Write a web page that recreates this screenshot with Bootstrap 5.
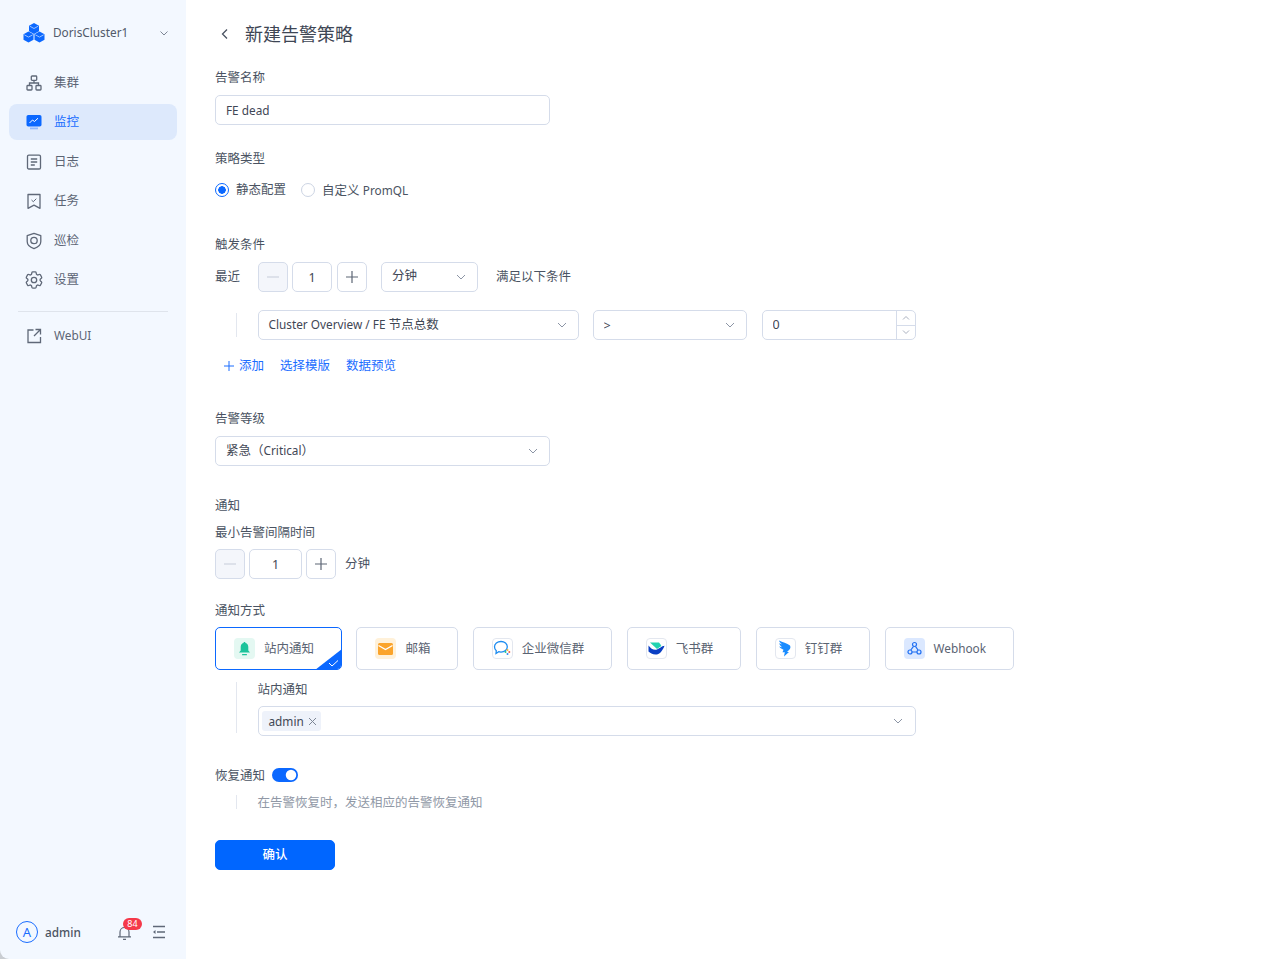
<!DOCTYPE html>
<html lang="zh-CN">
<head>
<meta charset="utf-8">
<title>新建告警策略</title>
<link href="https://cdn.jsdelivr.net/npm/bootstrap@5.3.0/dist/css/bootstrap.min.css" rel="stylesheet">
<style>
:root{--line:#d5dcea;--blue:#0b68ff;--txt:#4a5362;}
html,body{height:100%;overflow:hidden;}
body{font-family:"Noto Sans","Noto Sans CJK SC","Liberation Sans",sans-serif;font-size:12.5px;line-height:20px;color:var(--txt);background:#fff;}
.shell{background:#c9cdd2;height:959px;}
.side{width:186px;height:959px;background:#f3f8ff;flex:none;border-bottom-left-radius:9px;}
.lat{font-size:11.8px;padding-bottom:2px;}
.brand{height:20px;margin:23px 17px 0 23px;color:#515a6a;}
.menu-ln{height:36px;margin:0 9px 3.4px;padding-left:16px;border-radius:8px;color:#5c6575;text-decoration:none;gap:11px;}
.menu-ln.on{background:#dde9fc;color:#1a6dff;}
.first-ln{margin-top:22px;}
.sep{height:1px;background:#dfe4ec;margin:10px 18px 6px;}
.foot{margin-top:auto;height:24px;margin-bottom:15px;padding:0 20px 0 16px;}
.ava{width:22px;height:22px;border:1px solid #1a6dff;border-radius:50%;color:#1a6dff;font-size:13px;line-height:20px;text-align:center;}
.who{margin-left:7px;font-weight:500;color:#4b5463;font-size:11.8px;}
.bell{margin-left:auto;margin-right:20px;width:15px;height:14px;margin-top:2px;}
.cnt{top:-8px;left:6px;height:12px;min-width:19px;padding:0 3px;border-radius:7px;background:#f5394a;color:#fff;font-size:9px;line-height:12px;text-align:center;}
.main-pane{padding:0 0 0 29px;min-width:0;background:#fff;}
.ttl{height:20px;margin-top:24px;margin-bottom:23px;font-size:18px;color:#3e4654;gap:14px;padding-left:4px;}
.ttl span{padding-top:1px;line-height:19px;}
.fld{height:30px;border:1px solid var(--line);border-radius:5px;background-color:#fff;color:#3f4755;font-size:12.5px;line-height:20px;padding:4px 10px;box-shadow:none;}
.fld.latin{font-size:11.8px;}
.form-select.fld{padding:5px 24px 3px 10px;background-image:url("data:image/svg+xml,%3Csvg xmlns='http://www.w3.org/2000/svg' width='12' height='12' viewBox='0 0 12 12'%3E%3Cpath d='M2 4l4 4 4-4' fill='none' stroke='%238c95a5' stroke-width='1'/%3E%3C/svg%3E");background-repeat:no-repeat;background-position:right 10px center;background-size:12px 12px;}
.form-select.fld.up1{padding-top:3px;padding-bottom:5px;}
div.form-select.fld{padding-top:3px;padding-bottom:0;}
.w-336{width:335px;}
.lb{height:20px;color:#4a5362;line-height:18px;padding-top:2px;}
.lb.gap8{margin-bottom:8px;}
.lb.gap7{margin-bottom:7px;}
.mt-23{margin-top:23px;}.mt-34{margin-top:34px;}.mt-18{margin-top:18px;}.mt-16{margin-top:16px;}.mt-32{margin-top:32px;}.mt-29{margin-top:29px;}.mt-21{margin-top:21px;}.mt-7{margin-top:7px;}.mt-9{margin-top:9px;}.mt-28{margin-top:28px;}
.rdo-row{height:20px;margin-top:12px;}
.rdo{width:14px;height:14px;margin:0 7px 0 0;border-color:#ccd4e3;flex:none;}
.rdo:checked{background-color:#fff;border-color:var(--blue);background-image:radial-gradient(circle,var(--blue) 0 3.5px,transparent 4px);}
.stp{width:30px;height:30px;padding:0;border:1px solid var(--line);border-radius:5px;background:#fff;color:#5d6675;display:flex;align-items:center;justify-content:center;flex:none;}
.stp.off{background:#f4f6fb;color:#cdd4e0;}
.val{width:40px;padding:4px;text-align:center;margin:0 5px 0 4px;}
.val.wide{width:53px;margin-right:4px;}
.ind{margin-left:21px;padding-left:21.500px;position:relative;}
.ind::before{content:"";position:absolute;left:0;top:3px;bottom:3px;width:1px;background:#e3e7ef;}
.spin{width:154px;height:30px;border:1px solid var(--line);border-radius:5px;background:#fff;color:#3f4755;margin-left:1px;}
.spin input{border:0;outline:0;width:133px;padding:0 10px;color:#3f4755;background:transparent;font-size:12.5px;}
.spin-col{width:20px;border-left:1px solid var(--line);}
.spin-col div{flex:1;display:flex;align-items:center;justify-content:center;}
.spin-col div+div{border-top:1px solid var(--line);}
.lnk{color:#1a6dff;text-decoration:none;}
.chan{height:43px;border:1px solid var(--line);border-radius:5px;background:#fff;padding:0 27px 0 18px;gap:9px;color:#5a6372;flex:none;overflow:hidden;}
.chan.on{border-color:var(--blue);}
.chan .ic{width:21px;height:21px;border-radius:4px;display:flex;align-items:center;justify-content:center;flex:none;}
.ic.b{border:1px solid #e3e7ef;}
.cnr{right:-1px;bottom:-1px;}
.mul{width:658px;height:30px;border:1px solid var(--line);border-radius:5px;padding:0 11px 0 3px;}
.tg{height:20px;border-radius:3px;background:#eef2fa;color:#3f4755;padding:0 4px 0 7px;gap:4px;}
.swt{width:26px!important;height:14px;margin:0 0 0 7px!important;border:0;background-color:var(--blue)!important;border-radius:7px!important;float:none;position:relative;}
.sw-row{padding:0;min-height:0;height:20px;}
.sw-row span{padding-top:2px;line-height:18px;}
.hint{color:#9098a6;line-height:18px;padding-top:2px;}
.ok-btn{width:120px;height:30px;padding:1px 0 0;border-radius:5px;background:#0066ff;border-color:#0066ff;color:#fff;font-size:12.5px;font-weight:500;}
</style>
</head>
<body>
<div class="shell d-flex">
  <aside class="side d-flex flex-column">
    <div class="brand d-flex align-items-center">
      <svg width="22" height="20" viewBox="0 0 22 20" class="me-2 flex-none"><path d="M11 0l5 2.800v5.400L11 11 6 8.200V2.800z" fill="#0b68ff"/><path d="M6.800 3.200L11 5.500l4.200-2.300" fill="none" stroke="#9cc2ff" stroke-width="1"/><path d="M5.500 8.500l5 2.800v5.400l-5 2.800-5-2.800v-5.400z" fill="#0b68ff"/><path d="M1.300 11.800l4.200 2.300 4.200-2.300" fill="none" stroke="#9cc2ff" stroke-width="1"/><path d="M16.500 8.500l5 2.800v5.400l-5 2.800-5-2.800v-5.400z" fill="#0b68ff"/><path d="M12.300 11.800l4.200 2.300 4.200-2.300" fill="none" stroke="#9cc2ff" stroke-width="1"/></svg>
      <span class="lat">DorisCluster1</span>
      <svg class="ms-auto" width="10" height="10" viewBox="0 0 10 10"><path d="M1.500 3.500L5 7l3.500-3.500" fill="none" stroke="#7d8695" stroke-width="1"/></svg>
    </div>
    <a class="menu-ln first-ln d-flex align-items-center" href="#">
      <svg width="18" height="18" viewBox="0 0 18 18" fill="none" stroke="#5f6878" stroke-width="1.300"><rect x="6.300" y="2" width="5.400" height="4.400" rx=".8"/><rect x="2" y="11.500" width="5" height="4.500" rx=".8"/><rect x="11" y="11.500" width="5" height="4.500" rx=".8"/><path d="M9 6.400V9M4.500 11.500V9h9v2.500"/></svg>
      <span>集群</span></a>
    <a class="menu-ln on d-flex align-items-center" href="#">
      <svg width="18" height="18" viewBox="0 0 18 18"><rect x="1.500" y="2" width="15" height="11.500" rx="1.800" fill="#0b68ff"/><rect x="5" y="14.500" width="8" height="1.800" fill="#8fb8ff"/><path d="M4.500 10l3-3 2 1.500 3.500-3.300" fill="none" stroke="#fff" stroke-width="1"/></svg>
      <span>监控</span></a>
    <a class="menu-ln d-flex align-items-center" href="#">
      <svg width="18" height="18" viewBox="0 0 18 18" fill="none" stroke="#5f6878" stroke-width="1.300"><rect x="2.500" y="2.200" width="13" height="13.800" rx="1.300"/><path d="M5.800 6h6.400M5.800 9h6.400M5.800 12h4"/></svg>
      <span>日志</span></a>
    <a class="menu-ln d-flex align-items-center" href="#">
      <svg width="18" height="18" viewBox="0 0 18 18" fill="none" stroke="#5f6878" stroke-width="1.300"><path d="M3 2.500h12v13.800L9 13.200 3 16.300z" stroke-linejoin="round"/><path d="M6.500 8l1.800 1.700 3-3" stroke-width="1"/></svg>
      <span>任务</span></a>
    <a class="menu-ln d-flex align-items-center" href="#">
      <svg width="18" height="18" viewBox="0 0 18 18" fill="none" stroke="#5f6878" stroke-width="1.300"><path d="M9 1.300l6.800 2.400v5.800c0 3.300-2.800 5.800-6.800 7.200-4-1.400-6.800-3.900-6.800-7.200V3.700z" stroke-linejoin="round"/><circle cx="9" cy="8.500" r="3.200"/></svg>
      <span>巡检</span></a>
    <a class="menu-ln d-flex align-items-center" href="#">
      <svg width="18" height="18" viewBox="2 2 20 20" fill="none" stroke="#5f6878" stroke-width="1.450"><path d="M9.594 3.940c.09-.542.56-.94 1.110-.94h2.593c.55 0 1.020.398 1.110.94l.213 1.281c.063.374.313.686.645.870.074.040.147.083.22.127.325.196.72.257 1.075.124l1.217-.456a1.125 1.125 0 0 1 1.370.49l1.296 2.247a1.125 1.125 0 0 1-.26 1.431l-1.003.827c-.293.241-.438.613-.43.992a7.723 7.723 0 0 1 0 .255c-.008.378.137.75.43.991l1.004.827c.424.35.534.955.26 1.430l-1.298 2.247a1.125 1.125 0 0 1-1.369.491l-1.217-.456c-.355-.133-.75-.072-1.076.124a6.470 6.470 0 0 1-.22.128c-.331.183-.581.495-.644.869l-.213 1.281c-.09.543-.56.94-1.110.94h-2.594c-.55 0-1.019-.398-1.110-.94l-.213-1.281c-.062-.374-.312-.686-.644-.87a6.520 6.520 0 0 1-.22-.127c-.325-.196-.72-.257-1.076-.124l-1.217.456a1.125 1.125 0 0 1-1.369-.49l-1.297-2.247a1.125 1.125 0 0 1 .26-1.431l1.004-.827c.292-.24.437-.613.43-.991a6.932 6.932 0 0 1 0-.255c.007-.38-.138-.751-.43-.992l-1.004-.827a1.125 1.125 0 0 1-.26-1.430l1.297-2.247a1.125 1.125 0 0 1 1.370-.491l1.216.456c.356.133.751.072 1.076-.124.072-.044.146-.086.22-.128.332-.183.582-.495.644-.869l.214-1.280Z"/><circle cx="12" cy="12" r="3"/></svg>
      <span>设置</span></a>
    <div class="sep"></div>
    <a class="menu-ln d-flex align-items-center" href="#">
      <svg width="18" height="18" viewBox="0 0 18 18" fill="none" stroke="#5f6878" stroke-width="1.300"><path d="M8.500 3H3v12.500h12.500V10M10.500 2.500h5v5M15.500 2.500L9 9"/></svg>
      <span class="lat">WebUI</span></a>
    <div class="foot d-flex align-items-center">
      <div class="ava flex-none">A</div>
      <span class="who">admin</span>
      <div class="bell position-relative">
        <svg class="d-block" width="15" height="14" viewBox="0 0 15 14" fill="none" stroke="#5f6878" stroke-width="1.200"><path d="M1 10.800h13M3 10.800V6a4.500 4.500 0 0 1 9 0v4.800M6 13.300h3"/></svg>
        <div class="cnt position-absolute">84</div>
      </div>
      <svg width="14" height="14" viewBox="0 0 14 14" fill="none" stroke="#5f6878" stroke-width="1.300"><path d="M1 1.500h12M5 7h8M1 12.500h12"/><path d="M3.500 5L1 7l2.500 2z" fill="#5f6878" stroke="none"/></svg>
    </div>
  </aside>

  <main class="main-pane flex-grow-1">
    <div class="ttl d-flex align-items-center">
      <svg width="12" height="12" viewBox="0 0 12 12"><path d="M8 1.500L3.500 6 8 10.500" fill="none" stroke="#4a5362" stroke-width="1.300"/></svg>
      <span>新建告警策略</span>
    </div>

    <div class="lb gap8">告警名称</div>
    <input class="form-control fld latin w-336" value="FE dead">

    <div class="lb mt-23">策略类型</div>
    <div class="rdo-row d-flex align-items-center">
      <input class="form-check-input rdo" type="radio" name="k" checked>
      <span style="margin-right:15px">静态配置</span>
      <input class="form-check-input rdo" type="radio" name="k">
      <span>自定义 <span class="lat">PromQL</span></span>
    </div>

    <div class="lb gap8 mt-34">触发条件</div>
    <div class="d-flex align-items-center">
      <span style="margin-right:18px">最近</span>
      <button class="stp off" type="button"><svg width="12" height="12" viewBox="0 0 12 12"><path d="M0 6h12" stroke="currentColor" stroke-width="1.200"/></svg></button>
      <input class="form-control fld val" value="1">
      <button class="stp" type="button"><svg width="12" height="12" viewBox="0 0 12 12"><path d="M0 6h12M6 0v12" stroke="currentColor" stroke-width="1.200"/></svg></button>
      <select class="form-select fld up1" style="width:97px;margin-left:14px"><option>分钟</option></select>
      <span style="margin-left:18px">满足以下条件</span>
    </div>
    <div class="ind d-flex mt-18" style="gap:14px">
      <div class="form-select fld" style="width:321px"><span class="lat">Cluster Overview / FE</span> 节点总数</div>
      <select class="form-select fld" style="width:154px"><option>&gt;</option></select>
      <div class="spin d-flex">
        <input value="0">
        <div class="spin-col d-flex flex-column">
          <div><svg width="8" height="6" viewBox="0 0 8 6"><path d="M1 4.500L4 1.500l3 3" fill="none" stroke="#aab1bf"/></svg></div>
          <div><svg width="8" height="6" viewBox="0 0 8 6"><path d="M1 1.500L4 4.500l3-3" fill="none" stroke="#aab1bf"/></svg></div>
        </div>
      </div>
    </div>
    <div class="d-flex align-items-center mt-16 ps-2">
      <a class="lnk d-flex align-items-center" href="#" style="margin-left:1px;gap:5px"><svg width="10" height="10" viewBox="0 0 10 10"><path d="M0 5h10M5 0v10" stroke="#1a6dff" stroke-width="1"/></svg>添加</a>
      <a class="lnk" href="#" style="margin-left:16px">选择模版</a>
      <a class="lnk" href="#" style="margin-left:16px">数据预览</a>
    </div>

    <div class="lb gap8 mt-32">告警等级</div>
    <div class="form-select fld w-336">紧急（<span class="lat">Critical</span>）</div>

    <div class="lb gap7 mt-29">通知</div>
    <div class="lb gap7">最小告警间隔时间</div>
    <div class="d-flex align-items-center">
      <button class="stp off" type="button"><svg width="12" height="12" viewBox="0 0 12 12"><path d="M0 6h12" stroke="currentColor" stroke-width="1.200"/></svg></button>
      <input class="form-control fld val wide" value="1">
      <button class="stp" type="button"><svg width="12" height="12" viewBox="0 0 12 12"><path d="M0 6h12M6 0v12" stroke="currentColor" stroke-width="1.200"/></svg></button>
      <span style="margin-left:9px">分钟</span>
    </div>

    <div class="lb gap7 mt-21">通知方式</div>
    <div class="d-flex" style="gap:14.400px">
      <div class="chan on d-flex align-items-center position-relative">
        <span class="ic" style="background:#e4f8f2"><svg width="13" height="14" viewBox="0 0 13 14"><path d="M6.500 0c.7 0 1 .5 1 1 2 .5 2.800 2.200 2.800 4v3.500l1.700 2H1l1.700-2V5c0-1.800.8-3.500 2.800-4 0-.5.3-1 1-1z" fill="#1cc39b"/><rect x="4" y="12" width="5" height="1.300" rx=".6" fill="#1cc39b"/></svg></span>
        <span>站内通知</span>
        <svg class="cnr position-absolute" width="27" height="21" viewBox="0 0 27 21"><path d="M27 0v17a4 4 0 0 1-4 4H0z" fill="#0b68ff"/><path d="M14 14l3 3 6-5.500" fill="none" stroke="#fff" stroke-width="1"/></svg>
      </div>
      <div class="chan d-flex align-items-center">
        <span class="ic" style="background:#fff1d9"><svg width="15" height="12" viewBox="0 0 15 12"><rect width="15" height="12" rx="1.500" fill="#fba42b"/><path d="M.5 2.500l7 4 7-4" fill="none" stroke="#fff" stroke-width="1.300"/></svg></span>
        <span>邮箱</span>
      </div>
      <div class="chan d-flex align-items-center">
        <span class="ic b"><svg width="18" height="17" viewBox="0 0 18 17"><path d="M8 1.500c3.600 0 6.300 2.400 6.300 5.300 0 3-2.700 5.300-6.300 5.300-.8 0-1.600-.1-2.300-.4L3 13.500l.3-2.700C2.200 9.800 1.500 8.400 1.500 6.800c0-2.900 2.800-5.300 6.500-5.300z" fill="none" stroke="#1d8cf0" stroke-width="1.300"/><circle cx="14.500" cy="10" r="1" fill="#fdb62f"/><circle cx="12.500" cy="12" r="1" fill="#20c88f"/><circle cx="16.300" cy="12" r="1" fill="#f25d4a"/><circle cx="14.500" cy="14" r="1" fill="#2d8cf0"/></svg></span>
        <span>企业微信群</span>
      </div>
      <div class="chan d-flex align-items-center">
        <span class="ic b"><svg width="17" height="13" viewBox="0 0 17 13"><path d="M2 .5h9c1 1 1.800 2.200 2.300 3.500L9 7z" fill="#22d3b0"/><path d="M.5 3.500C3 7 6 8.500 9 7.500c2.500-.9 4.500-3.500 7.500-3.800C14.500 9 11.500 12.500 7.500 12.500 4.500 12.500 2 11 .5 9.500z" fill="#0a3fc4"/></svg></span>
        <span>飞书群</span>
      </div>
      <div class="chan d-flex align-items-center">
        <span class="ic b"><svg width="14" height="17" viewBox="0 0 14 17"><path d="M1 .5c3.500 1.500 8 3 11 5 .8 1.500.5 3-1 4.500L9 12h2l-5 4.500.8-4.200H4.500l1-2.500C3.500 9 1.800 7.500 1 6.500l3 .7C2.500 6 1.500 4.500 1.200 3.300l3 1.200C2.500 3 1.300 1.800 1 .5z" fill="#1a8cff"/></svg></span>
        <span>钉钉群</span>
      </div>
      <div class="chan d-flex align-items-center">
        <span class="ic" style="background:#dbe8ff"><svg width="15" height="15" viewBox="0 0 15 15" fill="none" stroke="#1f6ff2" stroke-width="1.200"><circle cx="7.500" cy="3.500" r="2"/><circle cx="3" cy="11" r="2"/><circle cx="12" cy="11" r="2"/><path d="M6.500 5.300L3.800 9M8.500 5.300L11 9M5 11h5"/></svg></span>
        <span class="lat">Webhook</span>
      </div>
    </div>
    <div class="ind mt-9">
      <div class="lb gap7">站内通知</div>
      <div class="mul d-flex align-items-center justify-content-between">
        <span class="tg lat d-inline-flex align-items-center">admin<svg width="9" height="9" viewBox="0 0 9 9"><path d="M1 1l7 7M8 1L1 8" stroke="#7d8695" stroke-width="1"/></svg></span>
        <svg width="12" height="12" viewBox="0 0 12 12"><path d="M2 4l4 4 4-4" fill="none" stroke="#8c95a5" stroke-width="1"/></svg>
      </div>
    </div>

    <div class="sw-row form-switch d-flex align-items-center mt-29">
      <span>恢复通知</span>
      <input class="form-check-input swt" type="checkbox" role="switch" checked>
    </div>
    <div class="ind hint mt-7">在告警恢复时，发送相应的告警恢复通知</div>

    <button class="btn btn-primary ok-btn mt-28" type="button">确认</button>
  </main>
</div>
</body>
</html>
